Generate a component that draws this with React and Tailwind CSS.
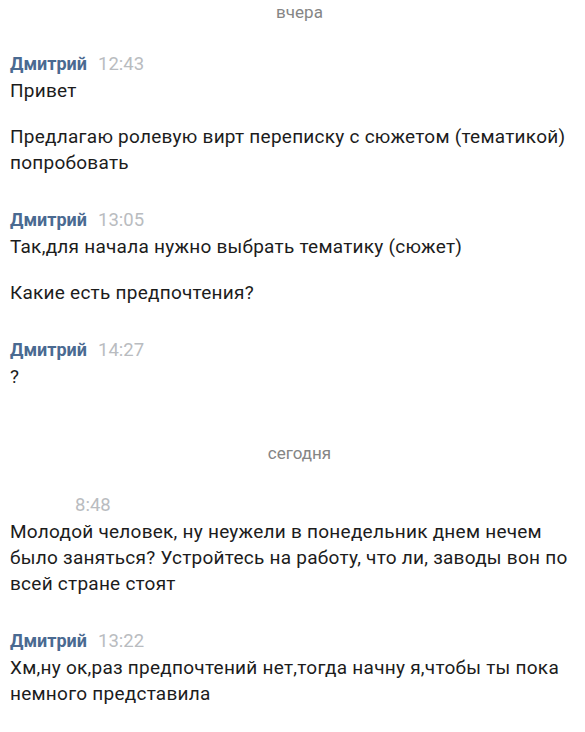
const messages = [
  { type: 'date', label: 'вчера', first: true },
  { type: 'msg', name: 'Дмитрий', time: '12:43', paragraphs: ['Привет', 'Предлагаю ролевую вирт переписку с сюжетом (тематикой) попробовать'] },
  { type: 'msg', name: 'Дмитрий', time: '13:05', paragraphs: ['Так,для начала нужно выбрать тематику (сюжет)', 'Какие есть предпочтения?'] },
  { type: 'msg', name: 'Дмитрий', time: '14:27', paragraphs: ['?'] },
  { type: 'date', label: 'сегодня' },
  { type: 'msg', name: '', time: '8:48', paragraphs: ['Молодой человек, ну неужели в понедельник днем нечем было заняться? Устройтесь на работу, что ли, заводы вон по всей стране стоят'] },
  { type: 'msg', name: 'Дмитрий', time: '13:22', paragraphs: ['Хм,ну ок,раз предпочтений нет,тогда начну я,чтобы ты пока немного представила'] },
]

function DateDivider({ label, first }) {
  return (
    <div className={`${first ? '' : 'mt-[51px]'} pl-[14px] text-center text-[17px] leading-[24px] text-[#858585]`}>
      {label}
    </div>
  )
}

function Message({ name, time, paragraphs, afterDate }) {
  return (
    <div className={afterDate ? 'mt-[26px]' : 'mt-[30px]'}>
      <div className="flex items-baseline gap-[11px] leading-[28px]">
        {name ? (
          <span className="text-[18px] font-bold text-[#4a6a91]">{name}</span>
        ) : (
          <span className="w-[54px]" />
        )}
        <span className="text-[18.5px] text-[#b9bcc0]">{time}</span>
      </div>
      {paragraphs.map((p, i) => (
        <p key={i} className={`${i > 0 ? 'mt-[20px]' : ''} text-[19px] leading-[26px] tracking-[0.25px] text-[#1c1c1c]`}>
          {p}
        </p>
      ))}
    </div>
  )
}

export default function App() {
  return (
    <div
      className="min-h-screen w-[585px] bg-white pl-[10px] pr-[10px]"
      style={{ fontFamily: 'Roboto, "Noto Sans", sans-serif' }}
    >
      {messages.map((m, i) => {
        if (m.type === 'date') return <DateDivider key={i} label={m.label} first={m.first} />
        const prev = messages[i - 1]
        return <Message key={i} {...m} afterDate={prev && prev.type === 'date'} />
      })}
    </div>
  )
}
